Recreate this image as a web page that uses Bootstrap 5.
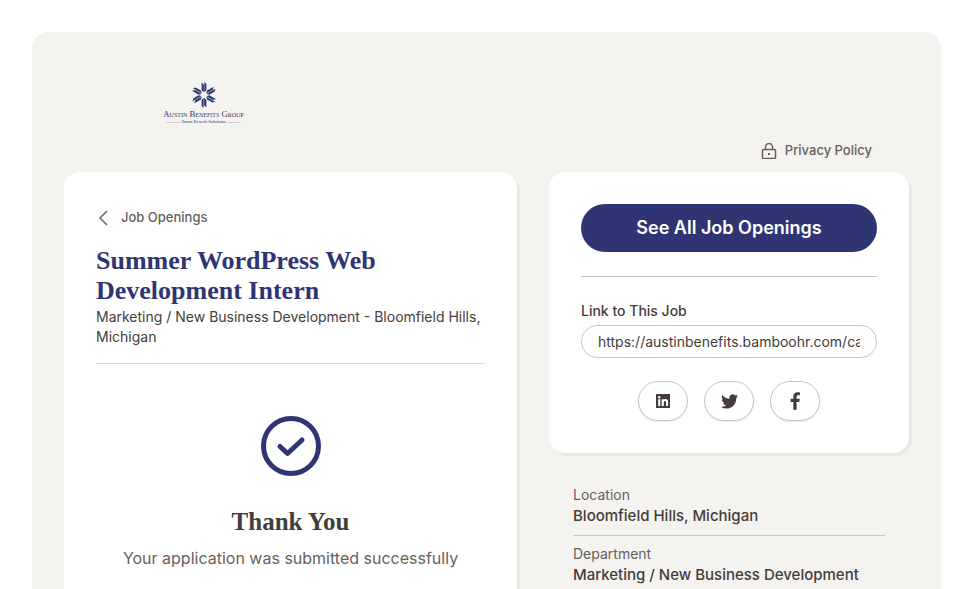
<!DOCTYPE html>
<html lang="en">
<head>
    <meta charset="UTF-8">
    <meta name="viewport" content="width=device-width, initial-scale=1.0">
    <title>Summer WordPress Web Development Intern</title>
    <link href="https://cdn.jsdelivr.net/npm/bootstrap@5.3.0/dist/css/bootstrap.min.css" rel="stylesheet">
    <style>
        html, body { height: 589px; overflow: hidden; }
        body { font-family: "Inter", "Liberation Sans", sans-serif; color: #443d3b; background: #fff; }
        .shell { margin: 32px 32px 0; width: 909px; background: #f5f3ef; border-radius: 16px 16px 0 0; padding: 0 32px; height: 700px; }
        .logo-row { height: 108px; padding: 50px 0 0 97px; }
        .logo-box { width: 85px; text-align: center; color: #2f3a73; font-family: "Liberation Serif", serif; line-height: 1; }
        .logo-box svg { display: block; margin: 0 auto; }
        .logo-name { font-size: 8.7px; font-variant: small-caps; white-space: nowrap; margin-top: 2px; height: 9px; line-height: 9px; }
        .logo-tag { font-size: 4.6px; white-space: nowrap; height: 5px; line-height: 5px; }
        .privacy-row { height: 32px; padding-right: 37px; font-size: 13px; font-weight: 500; color: #676160; gap: 8px; padding-bottom: 11px; }
        .main-col { width: 453px; }
        .side-col { width: 360px; }
        .panel { background: #fff; border-radius: 16px; box-shadow: 3px 3px 0 #ebe9e5; padding: 32px; }
        .back-link { font-size: 13px; font-weight: 500; color: #676160; gap: 13px; height: 28px; padding-left: 3px; }
        .job-title { font-family: "Liberation Serif", serif; font-weight: 700; font-size: 26px; line-height: 30px; color: #2f3573; margin: 14px 0 0; }
        .job-sub { font-size: 14px; line-height: 20px; color: #443d3b; margin: 1px 0 0; padding-bottom: 16px; border-bottom: 1px solid #dedbd8; }
        .thanks { padding-top: 52px; text-align: center; }
        .thanks svg { display: block; margin: 0 auto; }
        .thanks-title { font-family: "Liberation Serif", serif; font-weight: 700; font-size: 25px; line-height: 34px; margin: 29px 0 0; color: #443d3b; }
        .thanks-text { font-size: 16px; line-height: 24px; color: #676160; margin: 7px 0 0; }
        .all-btn { background: #2f3573; color: #fff; border: 0; border-radius: 24px; height: 48px; width: 100%; font-size: 18px; font-weight: 600; padding: 0 0 1px; }
        .all-btn:hover { background: #2f3573; color: #fff; }
        .side-rule { border-top: 1px solid #c9c5c1; margin: 24px 0 0; opacity: 1; }
        .link-label { font-size: 14px; font-weight: 500; line-height: 20px; margin: 24px 0 4px; display: block; color: #443d3b; }
        .link-input { height: 33px; border: 1px solid #c9c5c1; border-radius: 16px; padding: 0 16px; font-size: 14px; color: #443d3b; box-shadow: none; }
        .share-row { gap: 16px; margin-top: 23px; }
        .share-btn { width: 50px; height: 40px; border: 1px solid #c9c5c1; border-radius: 20px; background: #fff; padding: 0; box-shadow: 0 1px 1px #ebe9e5; }
        .facts { padding: 32px 24px 0; font-size: 15px; }
        .fact-label { font-size: 14px; line-height: 20px; color: #676160; margin-bottom: 1px; }
        .fact-value { line-height: 20px; font-weight: 500; color: #443d3b; font-size: 15px; }
        .fact-item { padding-bottom: 9px; margin-bottom: 8px; border-bottom: 1px solid #c9c5c1; }
    </style>
</head>
<body>
    <div class="shell">
        <div class="logo-row">
            <div class="logo-box">
                <svg width="26" height="26" viewBox="-12 -12 24 24" fill="#2f3a73">
                    <g id="petal"><path d="M-2.200-11.500-.1-9.500V-2.500L-2.200-4.500ZM.3-12 2.200-10.200V-4.500L.3-2.500Z"/></g>
                    <use href="#petal" transform="rotate(60)"/>
                    <use href="#petal" transform="rotate(120)"/>
                    <use href="#petal" transform="rotate(180)"/>
                    <use href="#petal" transform="rotate(240)"/>
                    <use href="#petal" transform="rotate(300)"/>
                </svg>
                <div class="logo-name">Austin Benefits Group</div>
                <div class="logo-tag">&#8212;&#8212;&#8212; Smart Benefit Solutions &#8212;&#8212;&#8212;</div>
            </div>
        </div>
        <div class="privacy-row d-flex justify-content-end align-items-center">
            <svg width="16" height="16" viewBox="0 0 16 16" fill="none" stroke="#676160" stroke-width="1.5">
                <rect x="1.500" y="6.500" width="13" height="9" rx="1"/>
                <path d="M4.500 6.500V4a3.500 3.500 0 0 1 7 0v2.500"/>
                <path d="M8 10v2" stroke-width="2"/>
            </svg>
            <span>Privacy Policy</span>
        </div>
        <div class="d-flex justify-content-between align-items-start">
            <div class="main-col panel">
                <div class="back-link d-flex align-items-center">
                    <svg width="9" height="16" viewBox="0 0 9 16" fill="none" stroke="#676160" stroke-width="1.500"><path d="M8 1 1 8l7 7"/></svg>
                    <span>Job Openings</span>
                </div>
                <h1 class="job-title">Summer WordPress Web Development Intern</h1>
                <p class="job-sub">Marketing / New Business Development - Bloomfield Hills, Michigan</p>
                <div class="thanks">
                    <svg width="60" height="60" viewBox="0 0 60 60" fill="none" stroke="#2f3573">
                        <circle cx="30" cy="30" r="27.500" stroke-width="5"/>
                        <path d="M19 30.500 26.500 37.500 41 24" stroke-width="5" stroke-linecap="round" stroke-linejoin="round"/>
                    </svg>
                    <h2 class="thanks-title">Thank You</h2>
                    <p class="thanks-text">Your application was submitted successfully</p>
                </div>
            </div>
            <div class="side-col">
                <div class="panel">
                    <button type="button" class="btn all-btn">See All Job Openings</button>
                    <hr class="side-rule">
                    <label class="link-label" for="jobLink">Link to This Job</label>
                    <input id="jobLink" type="text" class="form-control link-input" value="https://austinbenefits.bamboohr.com/careers/45">
                    <div class="share-row d-flex justify-content-center">
                        <button type="button" class="btn share-btn d-flex justify-content-center align-items-center" aria-label="LinkedIn">
                            <svg width="16" height="16" viewBox="0 0 16 16"><path fill="#443d3b" fill-rule="evenodd" d="M1 1h14v14H1ZM3.200 6.300V13h2.100V6.300ZM4.250 3a1.200 1.200 0 1 0 0 2.400 1.200 1.200 0 0 0 0-2.400ZM6.700 6.300V13h2.100V9.500c0-1 .4-1.600 1.200-1.600s1 .6 1 1.600V13h2.100V9.100c0-2-1-3-2.500-3-1 0-1.500.5-1.800 1V6.300Z"/></svg>
                        </button>
                        <button type="button" class="btn share-btn d-flex justify-content-center align-items-center" aria-label="Twitter">
                            <svg width="17" height="15" viewBox="0 0 24 20"><path fill="#443d3b" d="M24 2.400c-.9.400-1.800.7-2.800.8 1-.6 1.800-1.600 2.200-2.700-1 .6-2 1-3.100 1.200A4.900 4.900 0 0 0 11.900 6.200C7.800 6 4.200 4 1.700.9.400 3.100 1 6 3.200 7.500c-.8 0-1.600-.2-2.200-.6 0 2.300 1.600 4.400 4 4.900-.7.200-1.500.2-2.200.1.600 2 2.400 3.400 4.600 3.400A9.900 9.900 0 0 1 0 17.800 14 14 0 0 0 7.500 20c9.100 0 14.300-7.700 14-14.600 1-.7 1.800-1.600 2.500-3Z"/></svg>
                        </button>
                        <button type="button" class="btn share-btn d-flex justify-content-center align-items-center" aria-label="Facebook">
                            <svg width="11" height="18" viewBox="0 0 10 16"><path fill="#443d3b" d="M3 16V9H.500V6H3V4c0-2.500 1.500-4 3.800-4 1 0 2 .1 2.200.2v2.600H7.500C6.300 2.800 6 3.400 6 4.300V6h2.900l-.4 3H6v7Z"/></svg>
                        </button>
                    </div>
                </div>
                <div class="facts">
                    <div class="fact-item">
                        <div class="fact-label">Location</div>
                        <div class="fact-value">Bloomfield Hills, Michigan</div>
                    </div>
                    <div>
                        <div class="fact-label">Department</div>
                        <div class="fact-value">Marketing / New Business Development</div>
                    </div>
                </div>
            </div>
        </div>
    </div>
    <script src="https://cdn.jsdelivr.net/npm/bootstrap@5.3.0/dist/js/bootstrap.bundle.min.js"></script>
</body>
</html>
